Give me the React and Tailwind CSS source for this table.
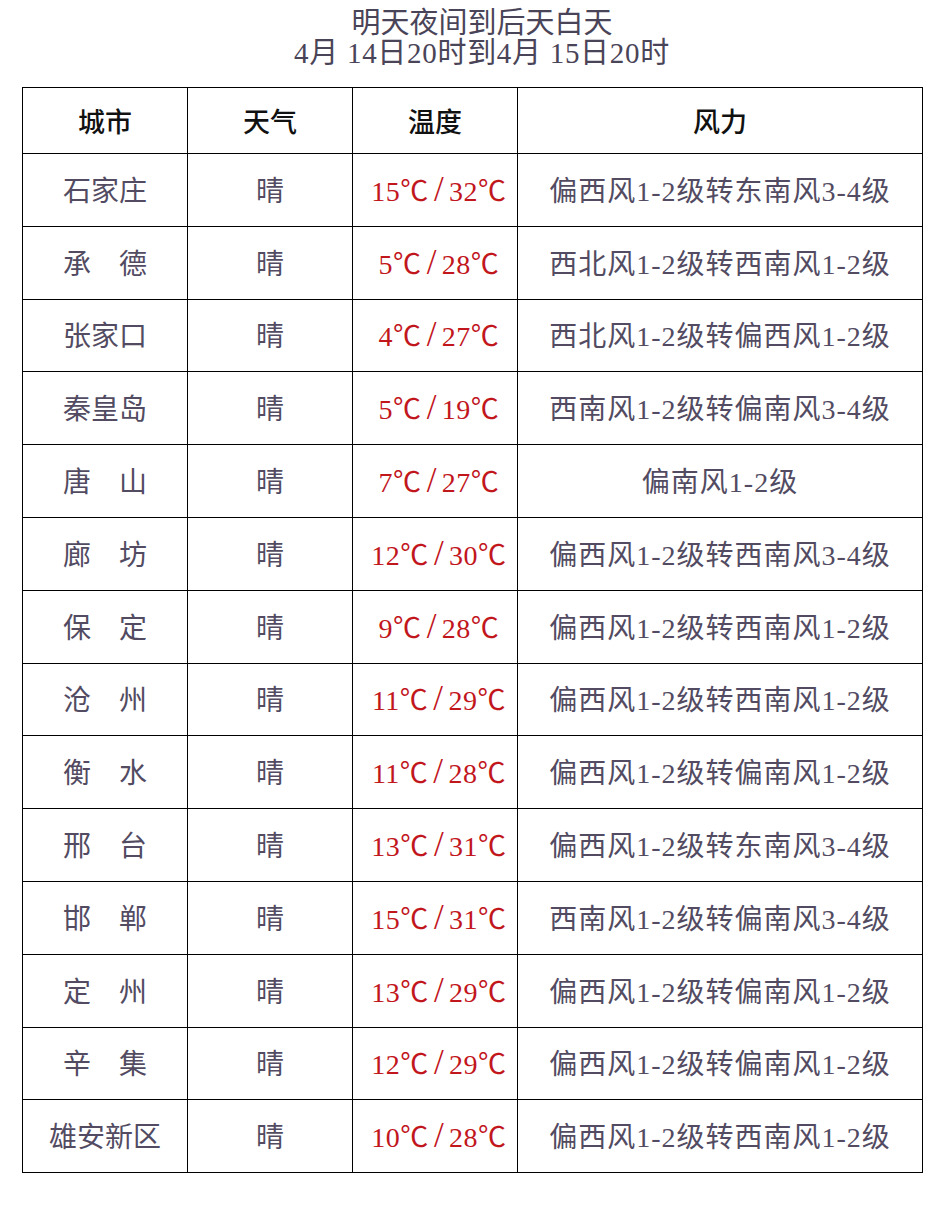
import React from "react";

const rows = [
  ["石家庄", "15", "32", "偏西风1-2级转东南风3-4级"],
  ["承　德", "5", "28", "西北风1-2级转西南风1-2级"],
  ["张家口", "4", "27", "西北风1-2级转偏西风1-2级"],
  ["秦皇岛", "5", "19", "西南风1-2级转偏南风3-4级"],
  ["唐　山", "7", "27", "偏南风1-2级"],
  ["廊　坊", "12", "30", "偏西风1-2级转西南风3-4级"],
  ["保　定", "9", "28", "偏西风1-2级转西南风1-2级"],
  ["沧　州", "11", "29", "偏西风1-2级转西南风1-2级"],
  ["衡　水", "11", "28", "偏西风1-2级转偏南风1-2级"],
  ["邢　台", "13", "31", "偏西风1-2级转东南风3-4级"],
  ["邯　郸", "15", "31", "西南风1-2级转偏南风3-4级"],
  ["定　州", "13", "29", "偏西风1-2级转偏南风1-2级"],
  ["辛　集", "12", "29", "偏西风1-2级转偏南风1-2级"],
  ["雄安新区", "10", "28", "偏西风1-2级转西南风1-2级"],
];

const font = {
  fontFamily: '"Liberation Serif", "Noto Sans CJK SC", serif',
};

export default function App() {
  return (
    <div className="w-[942px] h-[1218px] bg-white" style={font}>
      <div className="pt-[8px] pl-[22px] h-[87px] text-center text-[29px] leading-[30px] text-[#4a4458]">
        <div>明天夜间到后天白天</div>
        <div className="tracking-[0.7px]">4月 14日20时到4月 15日20时</div>
      </div>
      <table className="ml-[22px] w-[901px] border-collapse table-fixed">
        <colgroup>
          <col className="w-[165px]" />
          <col className="w-[165px]" />
          <col className="w-[165px]" />
          <col />
        </colgroup>
        <thead>
          <tr className="h-[66px] text-[27px] text-[#111111]">
            <th className="border border-black font-medium pt-[6px]">城市</th>
            <th className="border border-black font-medium pt-[6px]">天气</th>
            <th className="border border-black font-medium pt-[6px]">温度</th>
            <th className="border border-black font-medium pt-[6px]">风力</th>
          </tr>
        </thead>
        <tbody>
          {rows.map(([city, lo, hi, wind]) => (
            <tr key={city} className="h-[72.8px] text-[28px]">
              <td className="border border-black text-center text-[#524b62] pt-[4px]">{city}</td>
              <td className="border border-black text-center text-[#524b62] pt-[4px]">晴</td>
              <td className="border border-black text-center text-[#c2161d] pt-[4px] pl-[8px] whitespace-nowrap tracking-[0.5px]">
                {lo}℃<span className="mx-[5px] text-[35px] leading-none">/</span>{hi}℃
              </td>
              <td className="border border-black text-center text-[#524b62] pt-[4px] whitespace-nowrap tracking-[1px]">{wind}</td>
            </tr>
          ))}
        </tbody>
      </table>
    </div>
  );
}
